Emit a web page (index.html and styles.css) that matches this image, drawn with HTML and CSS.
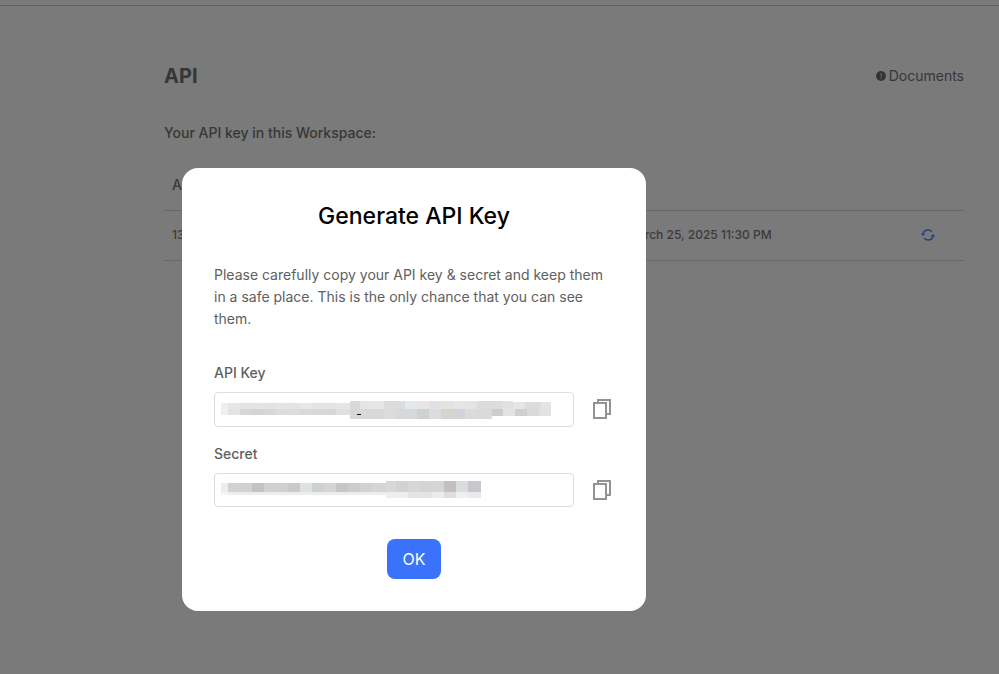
FILE: index.html
```html
<!DOCTYPE html>
<html lang="en">
<head>
    <meta charset="UTF-8">
    <meta name="viewport" content="width=device-width, initial-scale=1.0">
    <title>API</title>
    <link rel="stylesheet" href="styles.css">
</head>
<body>
    <div class="topbar"></div>

    <main class="page">
        <div class="page-head">
            <h1>API</h1>
            <a class="docs">
                <svg class="docs-icon" viewBox="0 0 10 10" width="10" height="10">
                    <circle cx="5" cy="5" r="5" fill="currentColor"/>
                    <rect x="4.4" y="2" width="1.2" height="3.6" fill="#ccc"/>
                    <rect x="4.4" y="6.6" width="1.2" height="1.3" fill="#ccc"/>
                </svg>
                Documents
            </a>
        </div>

        <p class="page-sub">Your API key in this Workspace:</p>

        <div class="table">
            <div class="table-row table-head">
                <span>API Key</span>
            </div>
            <div class="table-row">
                <span>1384402</span>
                <span>March 25, 2025 11:30 PM</span>
                <svg class="refresh" viewBox="0 0 16 16" width="16" height="16" fill="none" stroke="currentColor" stroke-width="1.5">
                    <path d="M3 7.2C3.4 4.6 5.5 3 8 3c1.5 0 2.8.6 3.8 1.7"/>
                    <path d="M13 8.8C12.6 11.4 10.500 13 8 13c-1.500 0-2.800-.6-3.800-1.700"/>
                    <path d="M.8 6.600h4.400L3 9.200z" fill="currentColor" stroke="none"/>
                    <path d="M15.200 9.400h-4.400L13 6.800z" fill="currentColor" stroke="none"/>
                </svg>
            </div>
        </div>
    </main>

    <div class="overlay">
        <div class="modal">
            <h2>Generate API Key</h2>
            <p class="modal-text">Please carefully copy your API key &amp; secret and keep them in a safe place. This is the only chance that you can see them.</p>

            <label class="field-label">API Key</label>
            <div class="field-row">
                <div class="field field-tall"><div class="mosaic mosaic-key"></div></div>
                <svg class="copy" viewBox="0 0 20 22" width="20" height="22" fill="none" stroke="currentColor" stroke-width="2">
                    <path d="M6 5V2h12v14h-4"/>
                    <rect x="2" y="5" width="12" height="15"/>
                </svg>
            </div>

            <label class="field-label field-label-next">Secret</label>
            <div class="field-row">
                <div class="field"><div class="mosaic mosaic-secret"></div></div>
                <svg class="copy" viewBox="0 0 20 22" width="20" height="22" fill="none" stroke="currentColor" stroke-width="2">
                    <path d="M6 5V2h12v14h-4"/>
                    <rect x="2" y="5" width="12" height="15"/>
                </svg>
            </div>

            <div class="modal-foot">
                <button class="ok-btn">OK</button>
            </div>
        </div>
    </div>
</body>
</html>
```

FILE: styles.css
```css
* {
    box-sizing: border-box;
}
body {
    margin: 0;
    font-family: Inter, "Liberation Sans", sans-serif;
    background: #fff;
    color: #777;
    overflow: hidden;
}
.topbar {
    height: 6px;
    border-bottom: 1px solid #c8c8c8;
}
.page {
    width: 800px;
    margin-left: 164px;
    padding-top: 54px;
}
.page-head {
    display: flex;
    justify-content: space-between;
    align-items: center;
    height: 32px;
}
.page-head h1 {
    margin: 0;
    font-size: 20px;
    font-weight: 700;
    color: #727272;
}
.docs {
    display: flex;
    align-items: center;
    gap: 3px;
    padding-bottom: 2px;
    font-size: 14px;
    color: #757575;
}
.docs-icon {
    margin-top: 1px;
    color: #6e6e6e;
}
.page-sub {
    margin: 30px 0 0;
    font-size: 14px;
    line-height: 22px;
    font-weight: 500;
    color: #747474;
}
.table {
    margin-top: 16px;
    font-size: 12px;
    font-weight: 500;
    color: #7c7c7c;
}
.table-row {
    display: grid;
    grid-template-columns: 455px 275px 1fr;
    align-items: center;
    height: 50px;
    padding-left: 8px;
    padding-bottom: 2px;
    border-bottom: 1px solid #d8d8d8;
}
.table-head {
    height: 51px;
    font-size: 14px;
}
.refresh {
    color: #4a8dff;
    margin-left: 18px;
}

.overlay {
    position: fixed;
    inset: 0;
    background: rgba(0, 0, 0, 0.52);
}
.modal {
    position: absolute;
    left: 182px;
    top: 168px;
    width: 464px;
    height: 443px;
    padding: 32px;
    background: #fff;
    border-radius: 16px;
}
.modal h2 {
    margin: 0;
    font-size: 23px;
    line-height: 32px;
    font-weight: 500;
    text-align: center;
    color: #000;
}
.modal-text {
    margin: 32px 0;
    font-size: 14px;
    line-height: 22px;
    color: #606060;
}
.field-label {
    display: block;
    font-size: 14px;
    line-height: 22px;
    font-weight: 500;
    color: #606060;
    margin-bottom: 8px;
}
.field-label-next {
    margin-top: 16px;
}
.field-row {
    display: flex;
    align-items: center;
    gap: 18px;
}
.field {
    display: flex;
    align-items: center;
    width: 360px;
    height: 34px;
    padding-left: 6px;
    border: 1px solid #ddd;
    border-radius: 4px;
}
.field-tall {
    height: 35px;
}
.field-tall + .copy {
    margin-top: -1px;
}
.copy {
    color: #939393;
    flex-shrink: 0;
}

/* blurred-out key values */
.mosaic {
    background-repeat: no-repeat;
}
.mosaic-key {
    width: 330px;
    height: 18px;
    background-image:
        linear-gradient(#111, #111),
        linear-gradient(90deg, #eee 0 7px, #e6e6e6 7px 19px, #e3e3e1 19px 31px, #e4e4e2 31px 43px, #e3e2e0 43px 55px, #e2e4e7 55px 67px, #e3e3e2 67px 79px, #e5e7ea 79px 91px, #e4e3e2 91px 103px, #e3e3e1 103px 115px, #e4e5e7 115px 129px),
        linear-gradient(90deg, #f0f0f0 0 7px, #e3e3e3 7px 19px, #d6d6d6 19px 31px, #d4d4d2 31px 43px, #d8d7d5 43px 55px, #dcdcdb 55px 67px, #dadce0 67px 79px, #d9d9d9 79px 91px, #d8d8d6 91px 103px, #d8d7d6 103px 115px, #dee0e2 115px 129px),
        linear-gradient(90deg, #d9d9d8 0 10px, #e3e5e8 10px 22px, #e6e6e4 22px 34px, #dcdcdb 34px 46px, #dcdcdb 46px 55px, #e6e7ea 55px 67px, #e7e6e4 67px 79px, #dfe1e3 79px 91px, #e4e2df 91px 103px, #e7e6e3 103px 115px, #e2e5e6 115px 127px, #dcdcdc 127px 151px, #e0e0e0 151px 163px),
        linear-gradient(90deg, #d8d8d8 0 34px, #dcdbd9 34px 46px, #d7d8d9 46px 55px, #d6d9dc 55px 67px, #cdd1d2 67px 79px, #dcdcda 79px 91px, #d7d3cf 91px 103px, #cfd5d8 103px 115px, #dcdbda 115px 127px, #dadada 127px 142px),
        linear-gradient(90deg, #cdcdcd 0 11px, #e3e3e3 11px 23px, #cfcfcf 23px 35px, #d9d9d9 35px 47px, #e0e2e6 47px 59px),
        linear-gradient(90deg, #e6e6e6 0 12px, #dcdcdc 12px 28px, #e4e4e4 28px 40px);
    background-size:
        4px 1px,
        129px 6px,
        129px 6px,
        163px 8px,
        142px 10px,
        59px 7px,
        40px 7px;
    background-position:
        136px 13px,
        0 2px,
        0 8px,
        129px 0,
        129px 8px,
        271px 8px,
        292px 1px;
}
.mosaic-secret {
    width: 260px;
    height: 18px;
    background-image:
        linear-gradient(90deg, #eeedec 0 7px, #d2d2d2 7px 19px, #d2d1d0 19px 31px, #c5c2c2 31px 43px, #d1d1d0 43px 55px, #cfd0d2 55px 67px, #cdc9c8 67px 79px, #dde2e5 79px 91px, #ced0d2 91px 103px, #d6d5d3 103px 115px, #c9c5c2 115px 127px, #c9ced2 127px 139px, #d3d2d2 139px 151px, #d5d5d5 151px 165px),
        linear-gradient(90deg, #f5f5f5 0 7px, #ededed 7px 165px),
        linear-gradient(90deg, #d9d8d7 0 10px, #d2d2d2 10px 22px, #d6d8d7 22px 34px, #d5d4d3 34px 46px, #d2d7d6 46px 58px, #c4c0c2 58px 70px, #dadcde 70px 82px, #c8c8cc 82px 95px),
        linear-gradient(90deg, #eee 0 22px, #e4e4e4 22px 46px, #ececec 46px 58px, #dedede 58px 70px, #efefef 70px 82px, #eaeaea 82px 95px);
    background-size:
        165px 9px,
        165px 3px,
        95px 11px,
        95px 6px;
    background-position:
        0 2px,
        0 11px,
        165px 0,
        165px 11px;
}

.modal-foot {
    display: flex;
    justify-content: center;
    margin-top: 32px;
}
.ok-btn {
    width: 54px;
    height: 40px;
    border: none;
    border-radius: 8px;
    background: #3a72fb;
    color: #fff;
    font-family: inherit;
    font-size: 16px;
}
```
